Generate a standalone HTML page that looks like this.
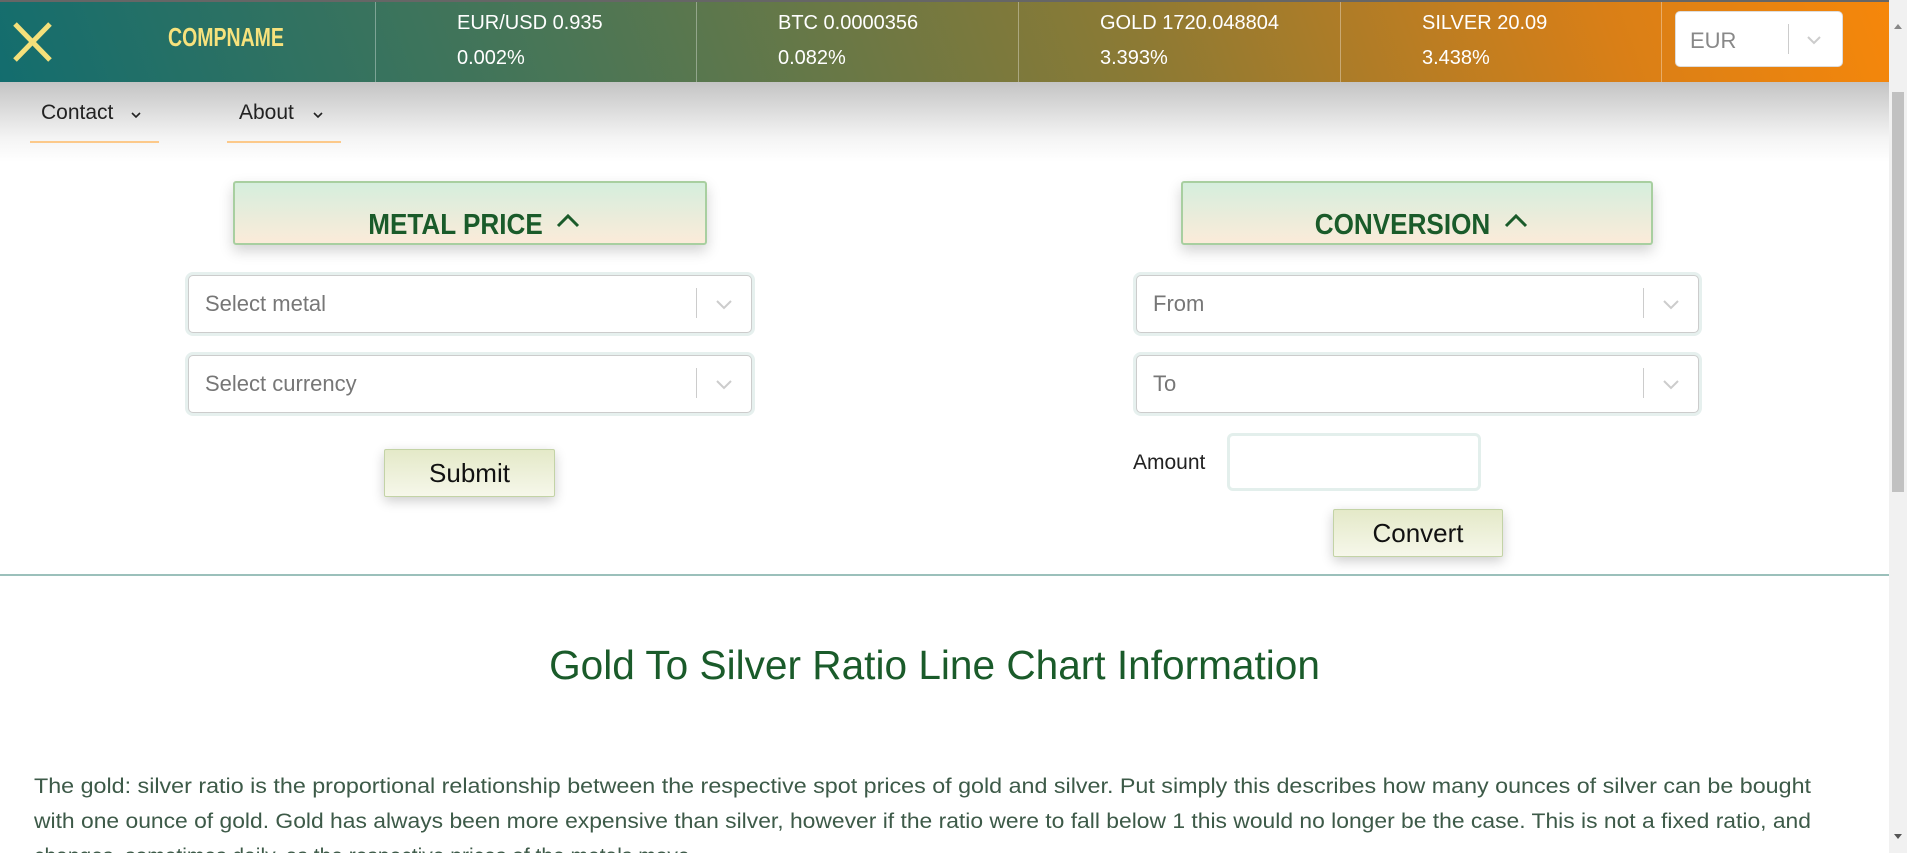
<!DOCTYPE html>
<html><head><meta charset="utf-8"><style>
*{margin:0;padding:0;box-sizing:border-box}
body{width:1907px;height:853px;overflow:hidden;background:#fff;font-family:"Liberation Sans",sans-serif;position:relative}
.a{position:absolute}
#hdr{left:0;top:0;width:1889px;height:82px;background:linear-gradient(70deg,#136d6e 0%,#4a7656 30%,#8c7a34 60%,#d97f17 85%,#f6870a 100%);border-top:2px solid #666}
.cell{top:0;height:82px;border-left:1px solid rgba(255,255,255,.35);color:#fff;font-size:20px}
.cell div{position:absolute;left:81px;white-space:nowrap}
.shadow{left:0;top:82px;width:1889px;height:80px;background:linear-gradient(#c4c4c4,#f4f4f4 70%,#fff)}
.nav{font-size:21px;color:#222;top:101px}
.ul{height:2px;background:#fcc98a;top:141px}
.box{height:64px;border:2px solid #a8cfa0;border-radius:3px;background:linear-gradient(#d5eedd,#fbebd9);box-shadow:0 6px 14px rgba(0,0,0,.18);color:#1a5b2a;font-size:29px;font-weight:bold}
.box span{position:absolute;left:0;right:0;top:26px;text-align:center;transform:scaleX(.9)}
.sel{height:58px;border:1px solid #ccc;border-radius:5px;box-shadow:0 0 0 3px #e6f0ee;background:#fff;color:#777;font-size:22px;padding:15px 0 0 16px}
.sel .sep{position:absolute;top:12px;width:1px;height:30px;background:#ccc}
.chev{position:absolute;top:22px}
.btn{border:1px solid #c3d3a6;background:linear-gradient(#e4e9c8,#f6f7ea);box-shadow:0 4px 12px rgba(0,0,0,.2);font-size:26px;color:#111;text-align:center;border-radius:2px}
</style></head><body>
<div id="hdr" class="a">
<svg class="a" style="left:12px;top:20px" width="42" height="40"><path d="M3 2 L38 38 M38 2 L3 38" stroke="#f5e07a" stroke-width="5"/></svg>
<div class="a" style="left:168px;top:20px;font-size:26px;font-weight:bold;color:#f7e27c;transform:scaleX(.75);transform-origin:left">COMPNAME</div>
<div class="a cell" style="left:375px;width:322px"><div style="top:10px">EUR/USD 0.935</div><div style="top:45px">0.002%</div></div>
<div class="a cell" style="left:696px;width:322px"><div style="top:10px">BTC 0.0000356</div><div style="top:45px">0.082%</div></div>
<div class="a cell" style="left:1018px;width:322px"><div style="top:10px">GOLD 1720.048804</div><div style="top:45px">3.393%</div></div>
<div class="a cell" style="left:1340px;width:322px;border-right:1px solid rgba(255,255,255,.35)"><div style="top:10px">SILVER 20.09</div><div style="top:45px">3.438%</div></div>
<div class="a" style="left:1675px;top:9px;width:168px;height:56px;background:#fff;border-radius:5px;border:1px solid #ddd"><span class="a" style="left:14px;top:16px;font-size:22px;color:#888">EUR</span><div class="a" style="left:112px;top:12px;width:1px;height:30px;background:#ccc"></div><svg class="a" style="left:130px;top:22px" width="16" height="12"><path d="M2 3 L8 9 L14 3" stroke="#ccc" stroke-width="2" fill="none"/></svg></div>
</div>
<div class="a" style="left:1889px;top:0;width:18px;height:853px;background:#f1f1f1"><div class="a" style="left:3px;top:92px;width:12px;height:400px;background:#c1c1c1"></div><div class="a" style="left:5px;top:24px;border:4px solid transparent;border-bottom:5px solid #888;border-top:0"></div><div class="a" style="left:5px;top:834px;border:4px solid transparent;border-top:5px solid #555;border-bottom:0"></div></div>
<div class="a shadow"></div>
<div class="a nav" style="left:41px">Contact</div>
<svg class="a" style="left:130px;top:111px" width="12" height="8"><path d="M2 2 L6 6 L10 2" stroke="#222" stroke-width="1.6" fill="none"/></svg>
<div class="a ul" style="left:30px;width:129px"></div>
<div class="a nav" style="left:239px">About</div>
<svg class="a" style="left:312px;top:111px" width="12" height="8"><path d="M2 2 L6 6 L10 2" stroke="#222" stroke-width="1.6" fill="none"/></svg>
<div class="a ul" style="left:227px;width:114px"></div>

<div class="a box" style="left:233px;top:181px;width:474px"><span>METAL PRICE &nbsp;&nbsp;&nbsp;</span><svg class="a" style="left:320px;top:30px" width="26" height="16"><path d="M3 13 L13 3 L23 13" stroke="#1a5b2a" stroke-width="3" fill="none"/></svg></div>
<div class="a box" style="left:1181px;top:181px;width:472px"><span>CONVERSION &nbsp;&nbsp;&nbsp;</span><svg class="a" style="left:320px;top:30px" width="26" height="16"><path d="M3 13 L13 3 L23 13" stroke="#1a5b2a" stroke-width="3" fill="none"/></svg></div>

<div class="a sel" style="left:188px;top:275px;width:564px">Select metal<div class="sep" style="left:507px"></div><svg class="chev" style="left:525px" width="20" height="14"><path d="M3 3 L10 10 L17 3" stroke="#ccc" stroke-width="2" fill="none"/></svg></div>
<div class="a sel" style="left:188px;top:355px;width:564px">Select currency<div class="sep" style="left:507px"></div><svg class="chev" style="left:525px" width="20" height="14"><path d="M3 3 L10 10 L17 3" stroke="#ccc" stroke-width="2" fill="none"/></svg></div>
<div class="a btn" style="left:384px;top:449px;width:171px;height:48px;line-height:46px">Submit</div>

<div class="a sel" style="left:1136px;top:275px;width:563px">From<div class="sep" style="left:506px"></div><svg class="chev" style="left:524px" width="20" height="14"><path d="M3 3 L10 10 L17 3" stroke="#ccc" stroke-width="2" fill="none"/></svg></div>
<div class="a sel" style="left:1136px;top:355px;width:563px">To<div class="sep" style="left:506px"></div><svg class="chev" style="left:524px" width="20" height="14"><path d="M3 3 L10 10 L17 3" stroke="#ccc" stroke-width="2" fill="none"/></svg></div>
<div class="a" style="left:1133px;top:451px;font-size:21px;color:#222">Amount</div>
<div class="a" style="left:1227px;top:433px;width:254px;height:58px;border:3px solid #e3efec;border-radius:6px"></div>
<div class="a btn" style="left:1333px;top:509px;width:170px;height:48px;line-height:46px">Convert</div>

<div class="a" style="left:0;top:574px;width:1889px;height:2px;background:#9bc0bb"></div>
<div class="a" style="left:0;top:642px;width:1869px;text-align:center;font-size:41px;color:#1a5b2a;transform:scaleX(.99)">Gold To Silver Ratio Line Chart Information</div>
<svg class="a" style="left:0;top:760px" width="1889" height="93" font-family="Liberation Sans, sans-serif" font-size="21" fill="#3d5a48">
<text x="34" y="33" textLength="1777" lengthAdjust="spacingAndGlyphs">The gold: silver ratio is the proportional relationship between the respective spot prices of gold and silver. Put simply this describes how many ounces of silver can be bought</text>
<text x="34" y="68" textLength="1777" lengthAdjust="spacingAndGlyphs">with one ounce of gold. Gold has always been more expensive than silver, however if the ratio were to fall below 1 this would no longer be the case. This is not a fixed ratio, and</text>
<text x="34" y="103">changes, sometimes daily, as the respective prices of the metals move.</text>
</svg>
</body></html>
